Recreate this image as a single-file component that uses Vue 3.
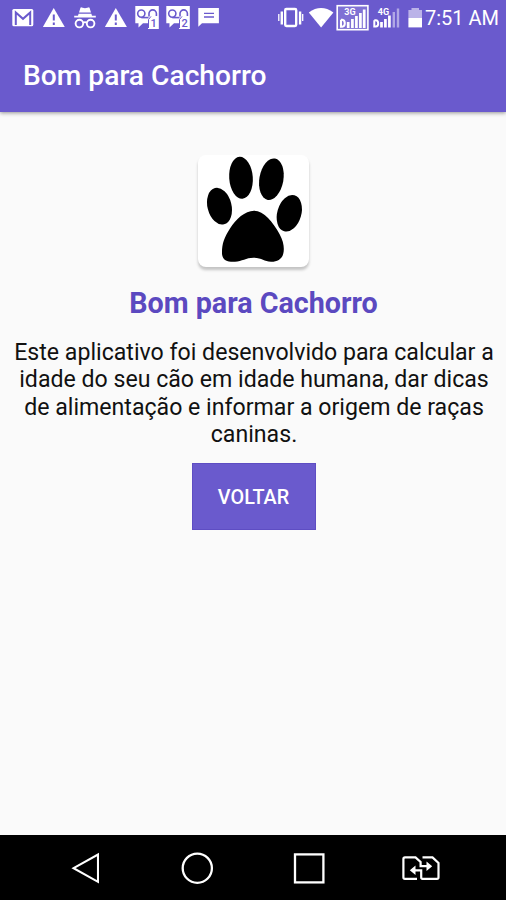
<script setup>
import { ref } from 'vue'

const appName = ref('Bom para Cachorro')
const description = [
  'Este aplicativo foi desenvolvido para calcular a',
  'idade do seu cão em idade humana, dar dicas',
  'de alimentação e informar a origem de raças',
  'caninas.'
]
</script>

<template>
  <div class="screen">
    <header class="top">
      <div class="status">
        <div class="notifications">
          <svg width="22" height="36" viewBox="12 0 22 36">
            <rect x="12.3" y="9" width="21" height="17.3" rx="1.6" fill="#fff" />
            <path d="M15.8 25V12.5L23 18.8L30.2 12.5V25" fill="none" stroke="#6a5acd" stroke-width="2" />
          </svg>
          <svg class="warn" width="22" height="36" viewBox="43 0 22 36">
            <path d="M53.7 8L64.8 27H42.8Z" fill="#fff" />
            <path d="M53.8 14.5V20.5M53.8 22.5V25" stroke="#6a5acd" stroke-width="2" />
          </svg>
          <svg class="incognito" width="22" height="36" viewBox="74 0 22 36">
            <path d="M80.3 8.2Q80.6 7.2 81.6 7.4L85 8.2L88.4 7.4Q89.4 7.2 89.7 8.2L91 12.6H79Z" fill="#fff" />
            <path d="M78.6 13.7H91.4L92 15.8H95.8V17.6H74.2V15.8H78Z" fill="#fff" />
            <g fill="none" stroke="#fff" stroke-width="1.9">
              <circle cx="79.4" cy="23.6" r="3.8" />
              <circle cx="90.6" cy="23.6" r="3.8" />
              <path d="M83 22.8Q85 21.4 87 22.8" />
            </g>
          </svg>
          <svg class="warn2" width="22" height="36" viewBox="105 0 22 36">
            <path d="M115.8 8L126.9 27H104.8Z" fill="#fff" />
            <path d="M115.8 14.5V20.5M115.8 22.5V25" stroke="#6a5acd" stroke-width="2" />
          </svg>
          <svg v-for="n in 2" :key="n" class="voicemail" width="24" height="36" viewBox="135 0 24 36">
            <path d="M135.3 6H158.8V29H148V23.2H143L138.5 27.4V23.2H135.3Z" fill="#fff" />
            <g fill="none" stroke="#6a5acd" stroke-width="1.6">
              <circle cx="141.3" cy="13.6" r="3.6" />
              <path d="M141.3 17.6H148.5" />
              <path d="M149 16.5V13.6a3.7 3.7 0 0 1 7.4 0V16" />
              <path d="M148.5 28V19.5L151 16.4" stroke-width="1" />
            </g>
            <text x="153.7" y="27" text-anchor="middle" class="badge">{{ n }}</text>
          </svg>
          <svg class="chat" width="22" height="36" viewBox="198 0 22 36">
            <path d="M198.3 8H218.9V23.2H202L198.3 26.8Z" fill="#fff" />
            <path d="M204 13.4H214M204 17H214" stroke="#6a5acd" stroke-width="1.3" />
          </svg>
        </div>
        <div class="indicators">
          <svg width="26" height="36" viewBox="278 0 26 36">
            <rect x="285.2" y="9" width="11" height="17" rx="1.2" fill="none" stroke="#fff" stroke-width="2.4" />
            <path d="M281.8 11.5V24.5M300.1 11.5V24.5" stroke="#fff" stroke-width="2.4" />
            <path d="M278.8 14V21M302.7 14V21" stroke="#fff" stroke-width="1.3" />
          </svg>
          <svg class="wifi" width="26" height="36" viewBox="308 0 26 36">
            <path d="M308.8 12.4Q321 3.6 333.4 12.4L321.1 27.4Z" fill="#fff" />
          </svg>
          <svg class="sim1" width="33" height="36" viewBox="336 0 33 36">
            <rect x="337.2" y="5.7" width="30.7" height="24" fill="#ffffff24" stroke="#fff" stroke-width="1.6" />
            <text x="350" y="15" text-anchor="middle" class="net">3G</text>
            <path d="M341 19.7H342.2Q344.8 20 344.8 23.3T342.2 26.7H341V19.7" fill="none" stroke="#fff" stroke-width="2" />
            <path d="M348.2 22V28M352.4 19V28M356.4 16V28M360.4 13V28M364.2 9.5V28" stroke="#fff" stroke-width="2.7" />
          </svg>
          <svg class="sim2" width="28" height="36" viewBox="373 0 28 36">
            <text x="383.5" y="15" text-anchor="middle" class="net">4G</text>
            <path d="M374.3 20.2H375.8Q378.2 20.4 378.2 23.4T375.8 26.6H374.3V20.2" fill="none" stroke="#fff" stroke-width="2" />
            <path d="M381.5 22V27.5M385.4 19V27.5M389.4 15.5V27.5" stroke="#fff" stroke-width="2.7" />
            <path d="M393.8 12V27.5M398 8.5V27.5" stroke="#b0a7e5" stroke-width="2.4" />
          </svg>
          <svg class="battery" width="15" height="36" viewBox="408 0 15 36">
            <path d="M408.4 10H411.5V8H419V10H422V18H408.4Z" fill="#bbb3e8" />
            <path d="M408.4 18H422V27.4H408.4Z" fill="#fff" />
          </svg>
          <span class="time">7:51 AM</span>
        </div>
      </div>
      <div class="title">{{ appName }}</div>
    </header>

    <main class="content">
      <div class="logo">
        <svg width="111" height="112" viewBox="198 155 111 112">
          <ellipse cx="241" cy="177.8" rx="11.8" ry="21" transform="rotate(-4 241 177.8)" />
          <ellipse cx="271.4" cy="179.2" rx="12" ry="21" transform="rotate(10 271.4 179.2)" />
          <ellipse cx="219.5" cy="206.2" rx="12" ry="18.7" transform="rotate(-14 219.5 206.2)" />
          <ellipse cx="289.3" cy="213.3" rx="12" ry="18.7" transform="rotate(16 289.3 213.3)" />
          <path d="M254 210.7C264 211 273 222 279.5 234C284 242 284.4 249 283.3 253.5C282 259.5 276.5 262 271 261.8C264 261.5 262 257.8 253.5 257.8C246 257.8 242 261.5 235 261.7C228 262 222.3 260.8 222 253.5C221.8 244 224 238 230 228.5C236 219 245 210.7 254 210.7Z" />
        </svg>
      </div>
      <h1>{{ appName }}</h1>
      <p><span v-for="line in description" :key="line">{{ line }}</span></p>
      <button type="button">VOLTAR</button>
    </main>

    <nav class="navbar">
      <svg width="28" height="34" viewBox="71 851 28 34">
        <path d="M73.6 868.2L98 854.5V881.8Z" fill="none" stroke="#fff" stroke-width="2.1" />
      </svg>
      <svg class="home" width="34" height="34" viewBox="180 851 34 34">
        <circle cx="197.3" cy="868.2" r="14.6" fill="none" stroke="#fff" stroke-width="2.3" />
      </svg>
      <svg class="recent" width="34" height="34" viewBox="292 851 34 34">
        <rect x="295" y="854.4" width="28.4" height="28" fill="none" stroke="#fff" stroke-width="2.3" />
      </svg>
      <svg class="switch" width="40" height="34" viewBox="401 851 40 34">
        <g fill="none" stroke="#fff" stroke-width="2.2">
          <path d="M417 878.8H405Q403.4 878.8 403.4 877.2V859Q403.4 857.4 405 857.4H415.5L420.6 862V866.2H428" />
          <path d="M422.5 857.4H432.5L438.5 863V877.2Q438.5 878.8 437 878.8H422.5Q421.2 878.8 421.2 877.2V870.3H414" />
        </g>
        <path d="M426.5 861.5L432.2 866.2L426.5 871ZM415.5 865.5L409.8 870.3L415.5 875Z" fill="#fff" />
      </svg>
    </nav>
  </div>
</template>

<style>
body {
  margin: 0;
}
</style>

<style scoped>
.screen {
  width: 506px;
  height: 900px;
  display: flex;
  flex-direction: column;
  overflow: hidden;
  background: #fafafa;
  font-family: Roboto, "Liberation Sans", sans-serif;
}
svg {
  display: block;
  flex: none;
}
.top {
  height: 112px;
  flex: none;
  background: #6a5acd;
  box-shadow: 0 1px 4px #0000006b;
  color: #fff;
}
.status {
  height: 36px;
  display: flex;
  justify-content: space-between;
}
.notifications {
  display: flex;
  gap: 9px;
  padding-left: 12px;
}
.voicemail {
  margin-right: -2px;
}
.warn2 + .voicemail {
  margin-left: -1px;
}
.chat {
  margin-left: 1px;
}
.badge {
  font-size: 11px;
  font-weight: 500;
  fill: #6a5acd;
}
.net {
  font-size: 9px;
  font-weight: 700;
  fill: #fff;
}
.indicators {
  display: flex;
  width: 228px;
}
.wifi {
  margin-left: 4px;
}
.sim1 {
  margin-left: 2px;
}
.sim2 {
  margin-left: 4px;
}
.battery {
  margin-left: 7px;
}
.time {
  margin-left: 2px;
  font-size: 20px;
  line-height: 37px;
  white-space: nowrap;
}
.title {
  padding: 23px 0 0 23px;
  font-size: 28.2px;
  font-weight: 500;
  line-height: 33px;
}
.content {
  flex: 1;
  display: flex;
  flex-direction: column;
  align-items: center;
}
.logo {
  margin-top: 43px;
  border-radius: 8px;
  background: #fff;
  box-shadow: 0 3px 3px #00000038;
}
h1 {
  margin: 20px 0 0 1px;
  font-size: 28.7px;
  line-height: 33px;
  font-weight: 700;
  color: #5b49c0;
}
p {
  margin: 19px 0 0;
  padding-left: 2px;
  display: flex;
  flex-direction: column;
  align-items: center;
  font-size: 23.13px;
  line-height: 27.4px;
  color: #111;
  white-space: nowrap;
}
button {
  width: 124px;
  height: 67px;
  margin: 14.4px 0 0 1px;
  padding: 2px 0 0;
  border: 1px solid #5e4dc3;
  background: #6a5acd;
  color: #fff;
  font: 500 19.8px Roboto, "Liberation Sans", sans-serif;
}
.navbar {
  height: 65px;
  flex: none;
  box-sizing: border-box;
  display: flex;
  padding: 16px 0 0 71px;
  background: #000;
}
.home {
  margin-left: 81px;
}
.recent {
  margin-left: 78px;
}
.switch {
  margin-left: 75px;
}
</style>
